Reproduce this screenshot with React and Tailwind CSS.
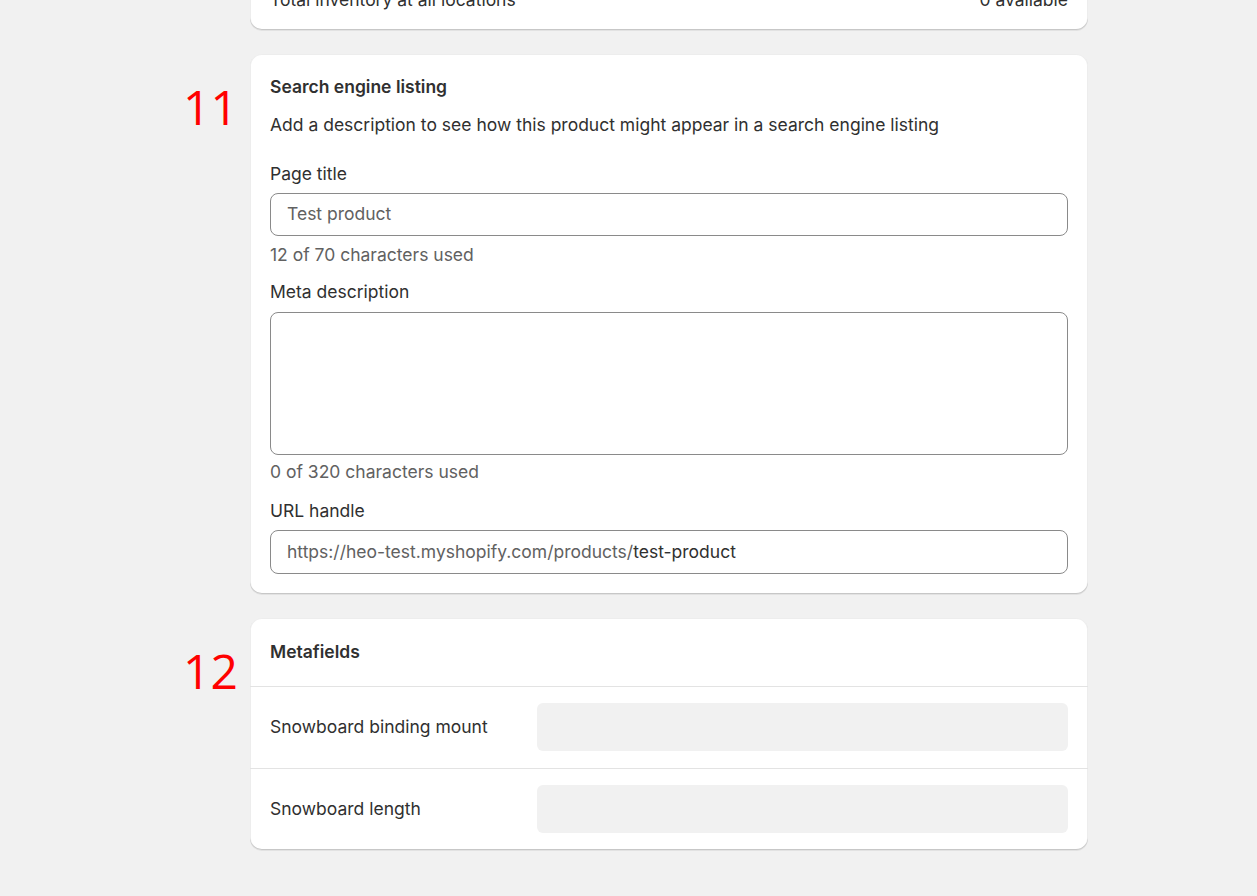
const cardShadow =
  'bg-white rounded-[12px] shadow-[0_1px_0_0_rgba(26,26,26,0.07),inset_0_-1px_0_0_rgba(0,0,0,0.16),inset_0_0_0_1px_rgba(0,0,0,0.07)]';

function Marker({ n }) {
  return (
    <div className="flex justify-end pr-[12px] pt-[29px]">
      <span className="text-[48px] leading-[48px] text-[#ff0000]" style={{ fontFamily: '"Open Sans", "Liberation Sans", sans-serif' }}>
        {n}
      </span>
    </div>
  );
}

function MetafieldRow({ label, last }) {
  return (
    <div className={`flex items-center px-5 pt-4 pb-[17px] ${last ? '' : 'border-b border-[#e3e3e3]'}`}>
      <div className="w-[267px] text-[17.5px] leading-6 text-[#303030]">{label}</div>
      <div className="flex-1 h-12 rounded-[6px] bg-[#f1f1f1]" />
    </div>
  );
}

export default function App() {
  return (
    <div
      className="min-h-screen bg-[#f1f1f1] overflow-hidden text-[#303030]"
      style={{ fontFamily: 'Inter, "Noto Sans", sans-serif' }}
    >
      <div className="grid grid-cols-[250px_838px] gap-y-6">
        {/* Inventory card (scrolled past) */}
        <div />
        <div className={`${cardShadow} -mt-[28px] pt-4 pb-[18px] px-5`}>
          <div className="flex justify-between text-[17.5px] leading-6">
            <span>Total inventory at all locations</span>
            <span>0 available</span>
          </div>
        </div>

        {/* Search engine listing */}
        <Marker n="11" />
        <div className={`${cardShadow} px-5 pt-[21px] pb-5`}>
          <h2 className="text-[17.5px] leading-6 font-semibold">Search engine listing</h2>
          <p className="mt-[14px] text-[17.5px] leading-6">
            Add a description to see how this product might appear in a search engine listing
          </p>

          <label className="block mt-[25px] text-[17.5px] leading-6">Page title</label>
          <div className="mt-[7px] h-[43px] rounded-[8px] border border-[#8a8a8a] flex items-center px-4 text-[17.5px] text-[#616161]">
            Test product
          </div>
          <p className="mt-[7px] text-[17.5px] leading-6 text-[#616161]">12 of 70 characters used</p>

          <label className="block mt-[13px] text-[17.5px] leading-6">Meta description</label>
          <div className="mt-[8px] h-[143px] rounded-[8px] border border-[#8a8a8a]" />
          <p className="mt-[5px] text-[17.5px] leading-6 text-[#616161]">0 of 320 characters used</p>

          <label className="block mt-[15px] text-[17.5px] leading-6">URL handle</label>
          <div className="mt-[7px] h-[44px] rounded-[8px] border border-[#8a8a8a] flex items-center px-4 text-[17.5px]">
            <span className="text-[#616161]">https://heo-test.myshopify.com/products/</span>
            <span className="text-[#303030]">test-product</span>
          </div>
        </div>

        {/* Metafields */}
        <Marker n="12" />
        <div className={`${cardShadow} mb-[46px]`}>
          <div className="h-[69px] flex items-center px-5 border-b border-[#e3e3e3]">
            <h2 className="text-[17.5px] leading-6 font-semibold">Metafields</h2>
          </div>
          <MetafieldRow label="Snowboard binding mount" />
          <MetafieldRow label="Snowboard length" last />
        </div>
      </div>
    </div>
  );
}
